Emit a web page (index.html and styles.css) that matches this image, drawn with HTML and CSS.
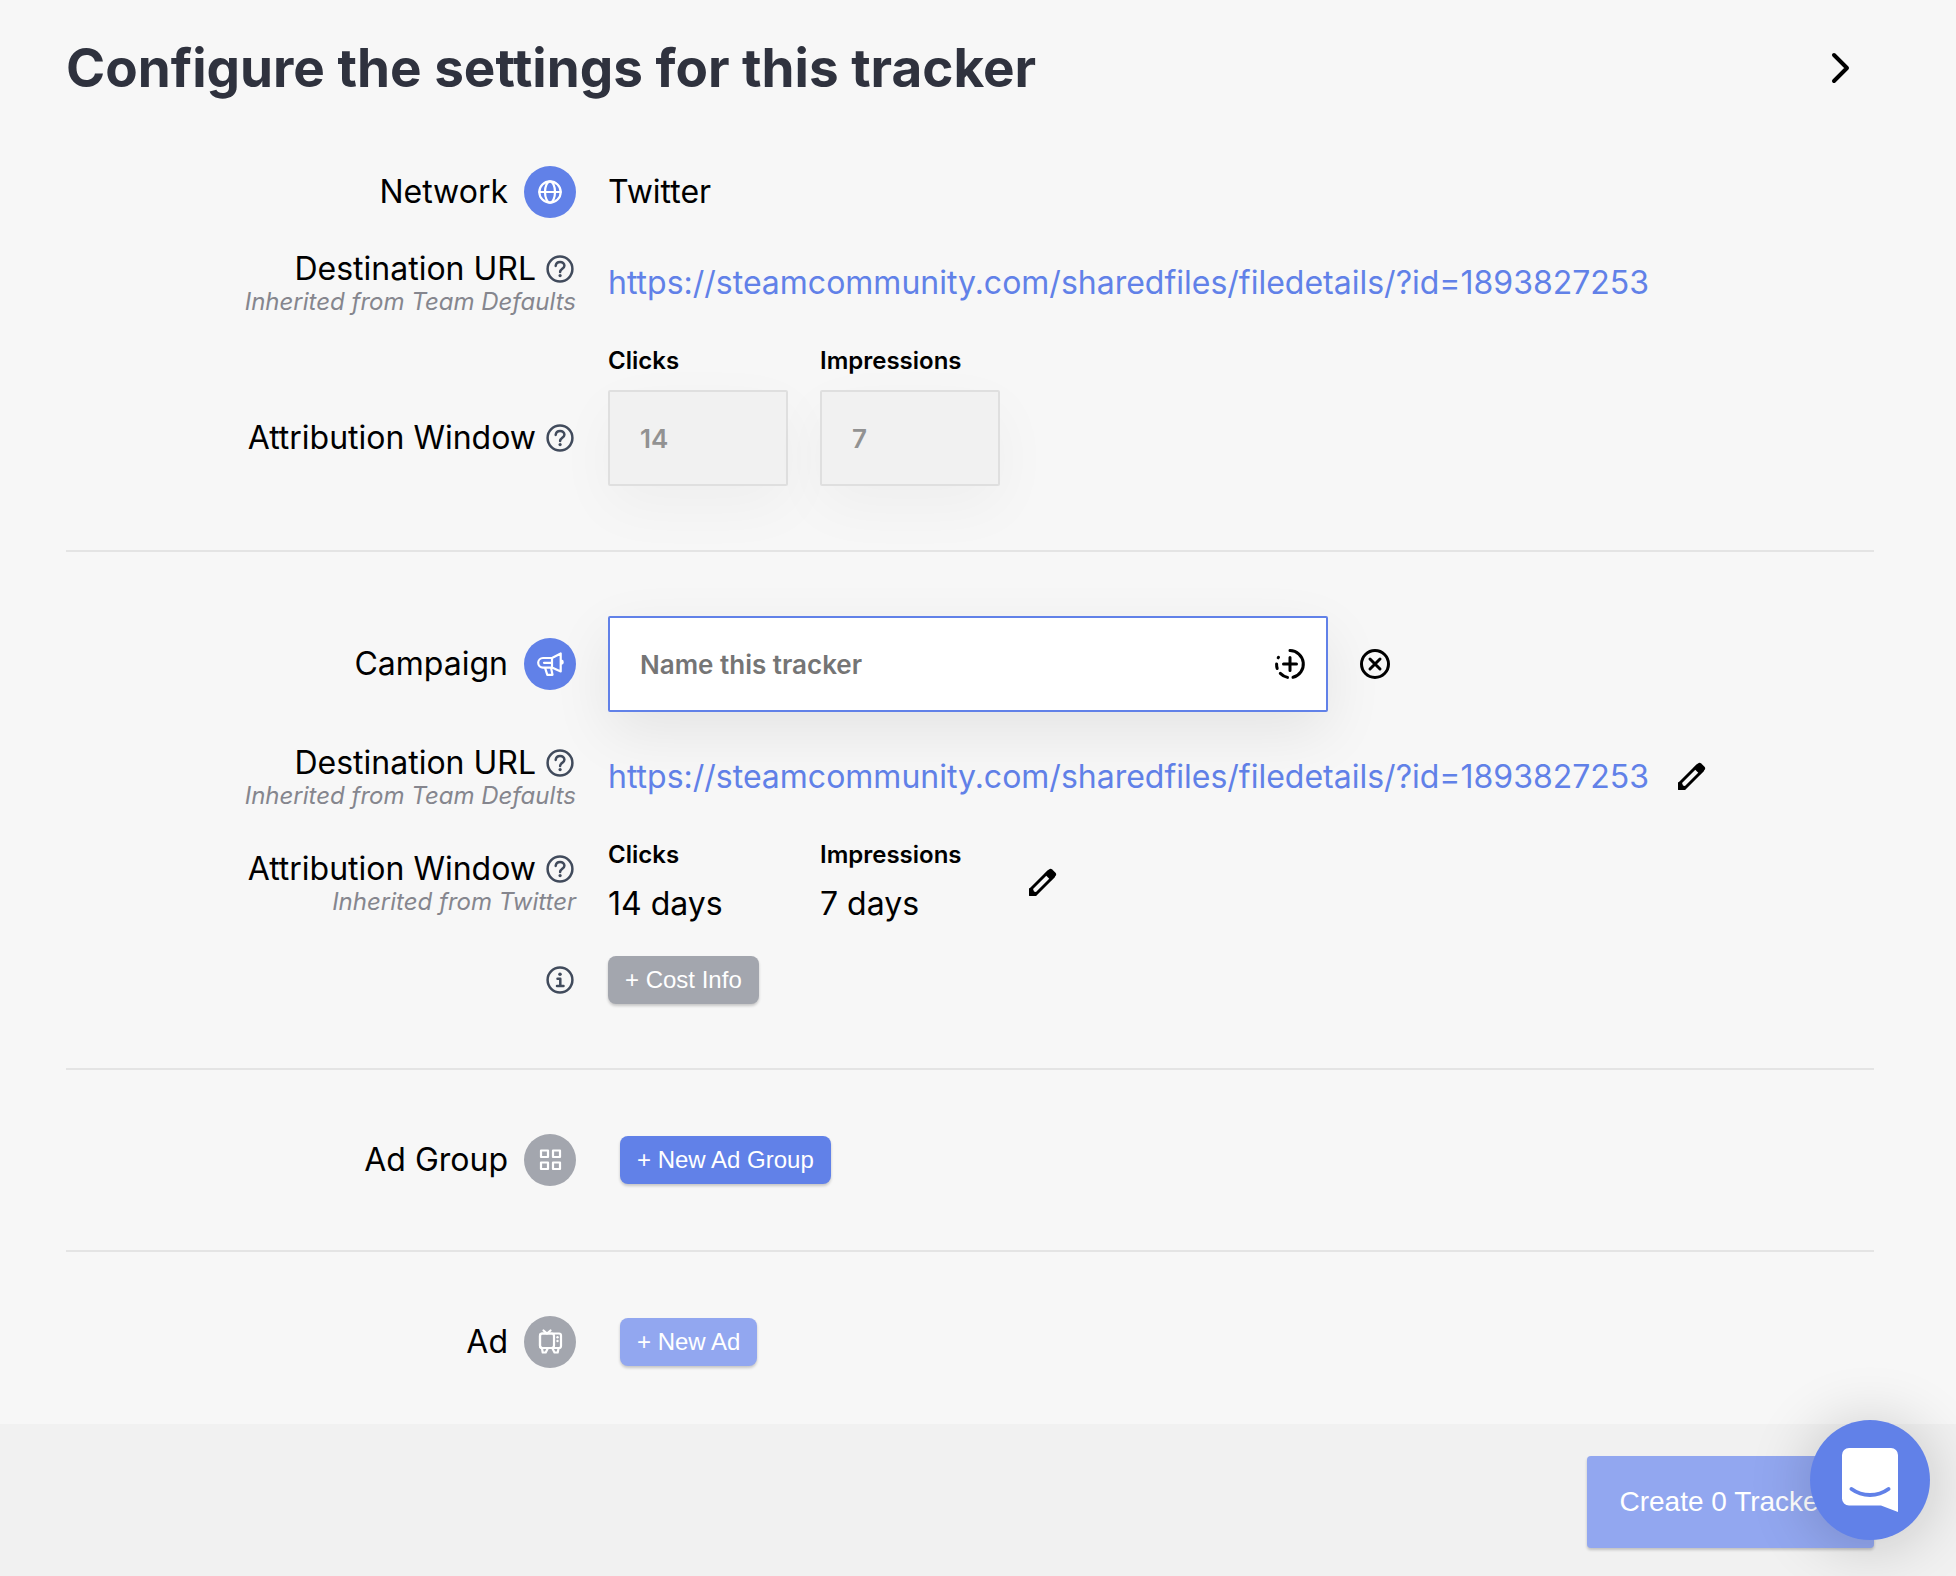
FILE: index.html
```html
<!DOCTYPE html>
<html lang="en">
<head>
  <meta charset="UTF-8" />
  <meta name="viewport" content="width=device-width, initial-scale=1.0"/>
  <title>Configure tracker</title>
  <link rel="stylesheet" href="styles.css">
</head>
<body>
  <!-- shared icons -->
  <svg class="sprite" aria-hidden="true">
    <symbol id="help" viewBox="0 0 32 32">
      <circle cx="16" cy="16" r="12.4"/>
      <path d="M11.7 12.9c.2-2.4 2-4 4.4-4s4.3 1.5 4.3 3.8c0 3-4.3 3.2-4.3 6.300"/>
      <circle class="dot" cx="16.1" cy="22.6" r="1.600"/>
    </symbol>
    <symbol id="pencil" viewBox="0 0 36 36">
      <path d="M6.500 29.500v-5L24.500 6.500l5 5L11.500 29.500z"/>
      <path class="solid" d="M20.500 9l4.500-4.500c1-.9 2.200-.9 3.200 0l3.300 3.300c.9 1 .9 2.200 0 3.200L27 15.500z"/>
      <path class="solid" d="M5 23.500l3.500-1 1.500 4 3.500 1-1.500 3.500H6c-.7 0-1-.4-1-1z"/>
    </symbol>
  </svg>

  <main>
    <header>
      <h1>Configure the settings for this tracker</h1>
      <button class="icon-btn next" aria-label="Next">
        <svg width="36" height="36" viewBox="0 0 36 36"><path d="M12 5l13 13-13 13"/></svg>
      </button>
    </header>

    <section>
      <div class="row">
        <div class="label">
          <div class="name wide">Network
            <span class="badge">
              <svg viewBox="0 0 52 52"><circle cx="26" cy="26" r="10.700"/><ellipse cx="26" cy="26" rx="5" ry="10.700"/><path d="M15.300 26h21.400"/></svg>
            </span>
          </div>
        </div>
        <div class="value">Twitter</div>
      </div>

      <div class="row">
        <div class="label">
          <div class="name">Destination URL <svg class="hint"><use href="#help"/></svg></div>
          <div class="inherited">Inherited from Team Defaults</div>
        </div>
        <div class="value"><a href="#">https://steamcommunity.com/sharedfiles/filedetails/?id=1893827253</a></div>
      </div>

      <div class="row">
        <div class="label beside-input">
          <div class="name">Attribution Window <svg class="hint"><use href="#help"/></svg></div>
        </div>
        <div class="value windows">
          <div class="window">
            <label for="clicks">Clicks</label>
            <input type="text" id="clicks" value="14" disabled>
          </div>
          <div class="window">
            <label for="impressions">Impressions</label>
            <input type="text" id="impressions" value="7" disabled>
          </div>
        </div>
      </div>
    </section>

    <section>
      <div class="row">
        <div class="label">
          <label class="name wide" for="campaign">Campaign
            <span class="badge">
              <svg viewBox="0 0 52 52"><path d="M28 20h-9a4.800 4.800 0 0 0 0 9.600h9M28 20l8.700-4.500v18L28 29.600zM20 24.800h8M21 29.600l2.300 7.200h5.200l-1.500-7.200M37.500 22.700c1.600.3 1.600 2.700 0 3"/></svg>
            </span>
          </label>
        </div>
        <div class="value campaign">
          <div class="name-box">
            <input type="text" id="campaign" placeholder="Name this tracker">
            <button class="icon-btn insert" aria-label="Insert macro">
              <svg width="32" height="32" viewBox="0 0 32 32">
                <path d="M16 2.500A13.600 13.600 0 0 1 19 29.300M13.500 29.400a13.600 13.600 0 0 1-7.200-4M3.200 20.500a13.600 13.600 0 0 1-.6-4.500M4.200 9.800l.3-.5M16 9.500v13M9.500 16h13"/>
              </svg>
            </button>
          </div>
          <button class="icon-btn" aria-label="Remove">
            <svg width="30" height="30" viewBox="0 0 30 30"><circle cx="15" cy="15" r="13.500"/><path d="M10 10l10 10M20 10L10 20"/></svg>
          </button>
        </div>
      </div>

      <div class="row">
        <div class="label">
          <div class="name">Destination URL <svg class="hint"><use href="#help"/></svg></div>
          <div class="inherited">Inherited from Team Defaults</div>
        </div>
        <div class="value editable">
          <a href="#">https://steamcommunity.com/sharedfiles/filedetails/?id=1893827253</a>
          <button class="icon-btn" aria-label="Edit URL"><svg width="36" height="36"><use href="#pencil"/></svg></button>
        </div>
      </div>

      <div class="row">
        <div class="label">
          <div class="name">Attribution Window <svg class="hint"><use href="#help"/></svg></div>
          <div class="inherited">Inherited from Twitter</div>
        </div>
        <div class="value editable">
          <div class="windows">
            <div class="window"><strong>Clicks</strong><span>14 days</span></div>
            <div class="window"><strong>Impressions</strong><span>7 days</span></div>
          </div>
          <button class="icon-btn" aria-label="Edit attribution window"><svg width="36" height="36"><use href="#pencil"/></svg></button>
        </div>
      </div>

      <div class="row">
        <div class="label">
          <div class="name">
            <svg class="hint" viewBox="0 0 32 32"><circle cx="16" cy="16" r="12.400"/><path d="M13.500 14.800h2.800v6.700M13 22h6.500"/><circle class="dot" cx="16" cy="10.300" r="1.800"/></svg>
          </div>
        </div>
        <div class="value"><button class="btn grey">+ Cost Info</button></div>
      </div>
    </section>

    <section>
      <div class="row">
        <div class="label">
          <div class="name wide">Ad Group
            <span class="badge off">
              <svg viewBox="0 0 52 52"><path d="M17 16.500h7v6.500h-7zM29 16.500h7v6.500h-7zM17 28.500h7v6.500h-7zM29 28.500h7v6.500h-7z"/></svg>
            </span>
          </div>
        </div>
        <div class="value indent"><button class="btn">+ New Ad Group</button></div>
      </div>
    </section>

    <section>
      <div class="row">
        <div class="label">
          <div class="name wide">Ad
            <span class="badge off">
              <svg viewBox="0 0 52 52"><rect x="16" y="17.500" width="21" height="14.500" rx="2"/><rect x="16" y="17.500" width="14" height="14.500" rx="2.500"/><path d="M19.500 14.500l3.500 3 3.500-3M18 32.500l.7 4h3l2-4M28.500 32.500l2 4h3.200l.8-4"/><circle class="dot" cx="33.500" cy="21.300" r="1.200"/><circle class="dot" cx="33.500" cy="25" r="1.200"/></svg>
            </span>
          </div>
        </div>
        <div class="value indent"><button class="btn" disabled>+ New Ad</button></div>
      </div>
    </section>
  </main>

  <footer>
    <button class="btn create" disabled>Create 0 Trackers</button>
  </footer>

  <button class="chat" aria-label="Open chat">
    <svg width="56" height="64" viewBox="0 0 56 64">
      <path class="bubble" d="M7 0h42a7 7 0 0 1 7 7v57l-17-6.500H7a7 7 0 0 1-7-7V7a7 7 0 0 1 7-7z"/>
      <path class="smile" d="M9.500 41c11 8 26 8 37 0"/>
    </svg>
  </button>
</body>
</html>
```

FILE: styles.css
```css
* {
  box-sizing: border-box;
}
body {
  margin: 0;
  min-height: 100vh;
  display: flex;
  flex-direction: column;
  font-family: Inter, "Liberation Sans", sans-serif;
  font-size: 32px;
  line-height: 38px;
  background: #f7f7f7;
  color: #000;
}
.sprite {
  position: absolute;
  width: 0;
  height: 0;
}
svg {
  display: block;
  fill: none;
  stroke: currentColor;
  stroke-width: 3;
  stroke-linecap: round;
  stroke-linejoin: round;
}
.dot, .solid {
  fill: currentColor;
  stroke: none;
}
main {
  flex: 1;
  padding: 36px 82px 0 66px;
}
header {
  display: flex;
  align-items: center;
  justify-content: space-between;
  margin-bottom: 2px;
}
h1 {
  margin: 0;
  font-size: 53px;
  line-height: 64px;
  font-weight: 700;
  color: #2f323e;
}
section {
  display: flex;
  flex-direction: column;
  gap: 32px;
  padding: 64px 0;
  border-bottom: 2px solid #e4e4e4;
}
section:last-child {
  padding-bottom: 56px;
  border-bottom: none;
}
.row {
  display: grid;
  grid-template-columns: minmax(0, 510px) 1fr;
  column-gap: 32px;
  align-items: center;
}

/* left column */
.label {
  display: flex;
  flex-direction: column;
  align-items: flex-end;
  text-align: right;
}
.beside-input {
  align-self: end;
  height: 96px;
  justify-content: center;
}
.name {
  display: flex;
  align-items: center;
  gap: 8px;
}
.wide {
  gap: 16px;
}
.hint {
  width: 32px;
  height: 32px;
  stroke-width: 2.5;
  color: #414b5c;
}
.inherited {
  font-size: 24px;
  line-height: 28px;
  font-style: italic;
  color: #85868e;
}
.badge {
  width: 52px;
  height: 52px;
  border-radius: 50%;
  background: #6181e8;
  color: #fff;
}
.badge svg {
  stroke-width: 2.2;
}
.badge.off {
  background: #a3a6ae;
}

/* right column */
a {
  color: #6181e8;
  text-decoration: none;
}
.windows, .campaign {
  display: flex;
  gap: 32px;
}
.campaign {
  align-items: center;
}
.editable {
  display: flex;
  align-items: center;
  gap: 24px;
}
.window {
  width: 180px;
  display: flex;
  flex-direction: column;
  gap: 16px;
  line-height: 40px;
}
.window label, .window strong {
  font-size: 24px;
  line-height: 26px;
  font-weight: 600;
}
.indent {
  padding-left: 12px;
}
input {
  width: 100%;
  height: 96px;
  padding: 0 30px;
  border: 2px solid #6181e8;
  border-radius: 2px;
  background: #fff;
  box-shadow: 0 20px 60px rgba(0, 0, 0, 0.08);
  font-family: inherit;
  font-size: 26px;
  font-weight: 600;
}
input::placeholder {
  color: #757575;
}
input:disabled {
  background: #f1f1f1;
  border-color: #dfdfdf;
  color: #929292;
  box-shadow: 0 20px 60px rgba(0, 0, 0, 0.04);
}
.name-box {
  position: relative;
  width: 720px;
}
.insert {
  position: absolute;
  top: 32px;
  right: 22px;
}

/* buttons */
button {
  border: none;
  cursor: pointer;
}
.icon-btn {
  padding: 0;
  background: none;
  color: #000;
}
.next {
  margin-right: 16px;
}
.next svg {
  stroke-width: 4;
}
.btn {
  display: block;
  height: 48px;
  padding: 0 17px;
  border-radius: 8px;
  background: #6181e8;
  color: #fff;
  font-family: "Liberation Sans", Arial, sans-serif;
  font-size: 24px;
  box-shadow: 0 2px 3px rgba(0, 0, 0, 0.2);
}
.btn:disabled {
  background: #92a7f0;
}
.grey {
  background: #a3a6ae;
}
footer {
  display: flex;
  justify-content: flex-end;
  padding: 32px 82px 28px 66px;
  background: #f1f1f1;
}
.create {
  height: 92px;
  padding: 0 32px;
  border-radius: 4px;
  font-size: 28px;
}
.chat {
  position: fixed;
  right: 26px;
  bottom: 36px;
  width: 120px;
  height: 120px;
  padding: 0;
  display: flex;
  align-items: center;
  justify-content: center;
  border-radius: 50%;
  background: #6181e8;
  box-shadow: 0 4px 64px rgba(0, 0, 0, 0.2);
}
.bubble {
  fill: #fff;
  stroke: none;
}
.smile {
  stroke: #6181e8;
  stroke-width: 4;
}
```
